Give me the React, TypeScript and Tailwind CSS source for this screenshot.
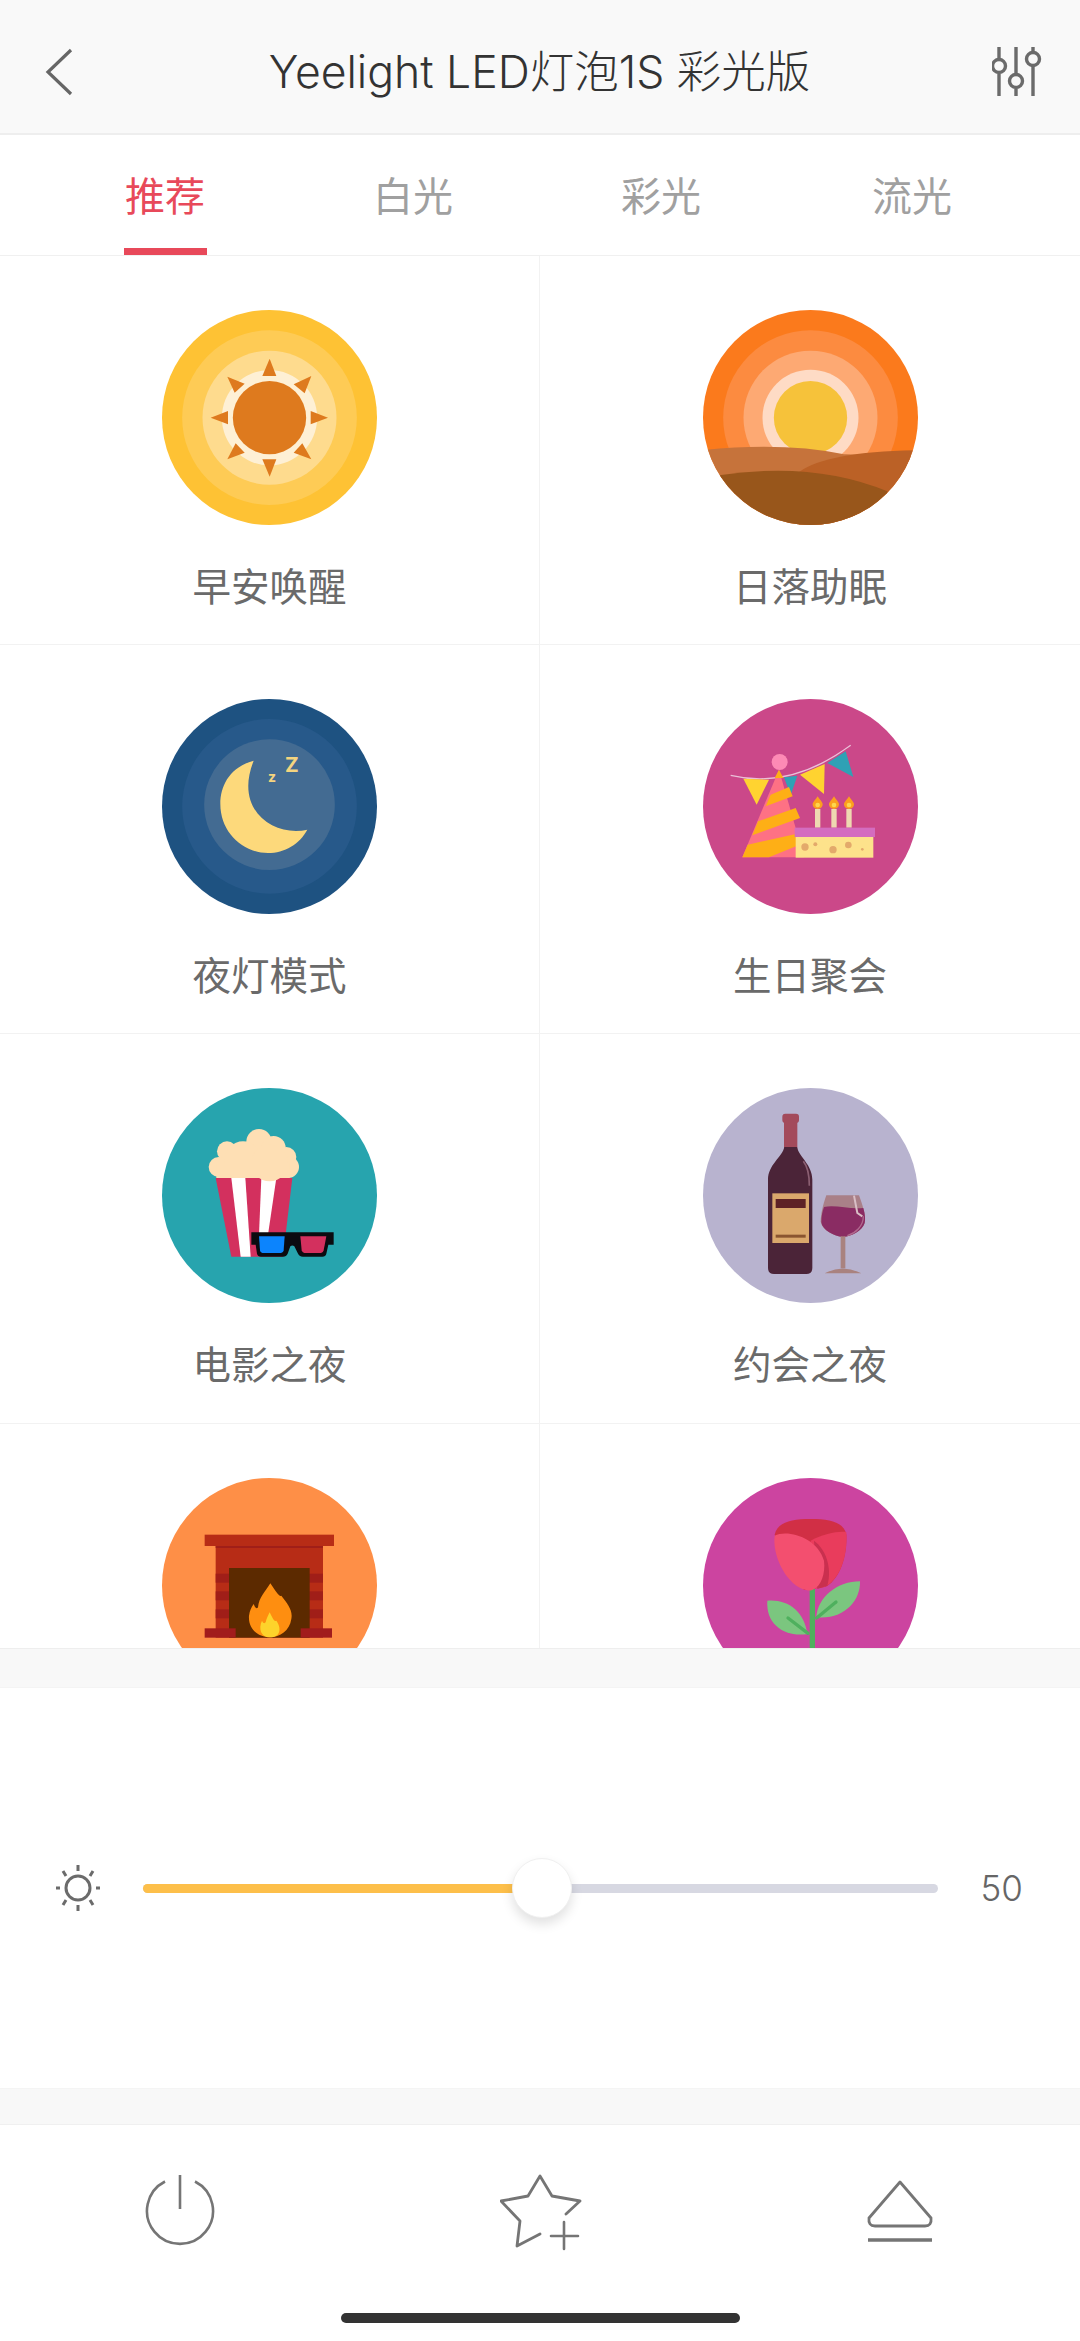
import React from "react";

const FONT = "font-['Inter','Noto_Sans_CJK_SC',sans-serif]";

function Scene({ top, bg, id, children }: { top: number; bg: string; id: string; children?: React.ReactNode }) {
  const cy = top + 322.5;
  return (
    <svg viewBox={`97 ${top} 645 645`} className="w-[215px] h-[215px] block shrink-0">
      <defs>
        <clipPath id={id}>
          <circle cx="419.5" cy={cy} r="322.5" />
        </clipPath>
      </defs>
      <circle cx="419.5" cy={cy} r="322.5" fill={bg} />
      <g clipPath={`url(#${id})`}>{children}</g>
    </svg>
  );
}

const Sun = () => (
  <Scene top={62} bg="#fec234" id="c1">
    <circle cx="419.5" cy="385" r="262" fill="#fecb55" />
    <circle cx="419.5" cy="385" r="201" fill="#fedb8e" />
    <circle cx="419.5" cy="385" r="143" fill="#fef0d5" />
    <circle cx="419.5" cy="385" r="110" fill="#de7a1e" />
    <g fill="#de7a1e">
      <polygon points="420,208 398,260 440,260" />
      <polygon points="420,562 398,510 440,510" />
      <polygon points="243,385 295,365 295,405" />
      <polygon points="595,385 543,365 543,405" />
      <polygon points="293,262 345,283 315,310" />
      <polygon points="545,260 492,285 525,312" />
      <polygon points="293,510 318,462 345,490" />
      <polygon points="545,510 518,462 492,490" />
    </g>
  </Scene>
);

const Sunset = () => (
  <Scene top={62} bg="#fb7a1c" id="c2">
    <circle cx="419.5" cy="385" r="262" fill="#fc8b40" />
    <circle cx="419.5" cy="385" r="201" fill="#fda973" />
    <circle cx="419.5" cy="385" r="144" fill="#fedbc5" />
    <circle cx="419.5" cy="385" r="110" fill="#f6c23a" />
    <path d="M100 482 Q 340 458 520 495 L 720 500 L 720 760 L 100 760 Z" fill="#c6733b" />
    <path d="M385 548 Q 470 488 730 483 L 730 760 L 385 760 Z" fill="#bb6126" />
    <path d="M145 558 Q 430 515 650 606 L 650 760 L 145 760 Z" fill="#98561b" />
  </Scene>
);

const Moon = () => (
  <Scene top={60} bg="#1e5281" id="c3">
    <circle cx="419.5" cy="382" r="262" fill="#27598a" />
    <circle cx="419.5" cy="377" r="196" fill="#436b92" />
    <path
      d="M372 245 C 300 265 272 320 272 375 C 272 460 340 522 415 522 C 465 522 510 495 533 452 C 440 475 310 400 372 245 Z"
      fill="#fdd97b"
    />
    <text x="466" y="278" fontSize="62" fontWeight="700" fontFamily="Inter, sans-serif" fill="#f4d47f">Z</text>
    <text x="415" y="310" fontSize="42" fontWeight="700" fontFamily="Inter, sans-serif" fill="#f4d47f">z</text>
  </Scene>
);

const Party = () => (
  <Scene top={58} bg="#cb4889" id="c4">
    <polygon points="340,293 380,288 360,347" fill="#2fa1b5" />
    <path d="M180 287 Q 360 330 540 197" fill="none" stroke="#eac0d8" strokeWidth="4" />
    <polygon points="218,297 295,300 258,375" fill="#ffd330" />
    <polygon points="388,285 462,253 460,343" fill="#ffd330" />
    <polygon points="470,250 525,215 548,292" fill="#2fa1b5" />
    <polygon points="325,270 215,533 400,533" fill="#fe7184" />
    <g fill="#feaf16">
      <polygon points="325,270 338,295 312,295" />
      <polygon points="300,345 355,322 366,350 285,380" />
      <polygon points="262,425 375,385 388,415 245,467" />
      <polygon points="231,495 390,460 400,490 295,533 215,533" />
    </g>
    <circle cx="327" cy="247" r="24" fill="#fd8ab5" />
    <rect x="433" y="388" width="16" height="56" fill="#eed9b1" />
    <rect x="482" y="388" width="16" height="56" fill="#eed9b1" />
    <rect x="527" y="388" width="16" height="56" fill="#eed9b1" />
    {[441, 490, 535].map((x) => (
      <g key={x}>
        <path d={`M${x} 350 C ${x + 8} 362 ${x + 15} 368 ${x + 15} 374 C ${x + 15} 382 ${x + 8} 388 ${x} 388 C ${x - 8} 388 ${x - 15} 382 ${x - 15} 374 C ${x - 15} 368 ${x - 8} 362 ${x} 350 Z`} fill="#fc9f1e" />
        <circle cx={x} cy="376" r="7" fill="#fdd64f" />
      </g>
    ))}
    <rect x="375" y="472" width="233" height="62" fill="#fde28b" />
    <rect x="372" y="444" width="241" height="28" fill="#d46cbf" />
    <g fill="#e3aa6b">
      <circle cx="403" cy="502" r="11" />
      <circle cx="434" cy="494" r="6" />
      <circle cx="487" cy="510" r="11" />
      <circle cx="533" cy="496" r="10" />
      <circle cx="575" cy="509" r="4" />
    </g>
  </Scene>
);

const Popcorn = () => (
  <Scene top={55} bg="#27a4ae" id="c5">
    <path d="M258 325 L488 325 L460 561 L305 561 Z" fill="#d3305e" />
    <path d="M305 325 L347 325 L363 561 L333 561 Z" fill="#ffffff" />
    <path d="M395 325 L440 325 L415 495 L388 495 Z" fill="#ffffff" />
    <g fill="#fedfb4">
      <circle cx="292" cy="245" r="30" />
      <circle cx="267" cy="292" r="30" />
      <circle cx="388" cy="216" r="38" />
      <circle cx="432" cy="235" r="36" />
      <circle cx="470" cy="262" r="30" />
      <circle cx="475" cy="292" r="33" />
      <circle cx="340" cy="270" r="55" />
      <circle cx="420" cy="280" r="55" />
      <rect x="260" y="280" width="220" height="45" />
    </g>
    <path d="M365 488 L612 488 L612 525 L596 525 L590 552 Q 588 561 578 561 L520 561 Q 508 561 504 550 L 494 530 Q 488 525 482 530 L 474 552 Q 470 561 460 561 L 394 561 Q 384 561 382 552 L 378 525 L 365 525 Z" fill="#0b0b10" />
    <path d="M388 500 L465 500 L462 542 Q 461 550 454 550 L 398 550 Q 392 550 391 542 Z" fill="#0c84fd" />
    <path d="M512 500 L590 500 L582 542 Q 580 550 574 550 L 524 550 Q 518 550 516 542 Z" fill="#d3305e" />
  </Scene>
);

const Wine = () => (
  <Scene top={55} bg="#b8b3cf" id="c6">
    <path d="M340 150 L380 150 L380 240 L340 240 Z" fill="#a34a5b" />
    <rect x="335" y="132" width="50" height="28" rx="9" fill="#a34a5b" />
    <path d="M341 232 L379 232 C 385 262 425 285 425 330 L425 595 Q425 613 407 613 L310 613 Q292 613 292 595 L292 330 C 292 285 335 262 341 232 Z" fill="#4b2438" />
    <path d="M398 275 C 410 290 416 320 416 348" fill="none" stroke="#8b5f72" strokeWidth="5" />
    <rect x="305" y="371" width="110" height="149" fill="#daa86c" />
    <rect x="315" y="388" width="90" height="27" fill="#5e2226" />
    <rect x="315" y="495" width="90" height="9" fill="#8a5530" />
    <path d="M467 377 L565 377 C 575 405 585 435 583 455 C 580 480 545 500 517 502 C 490 500 452 480 450 455 C 450 435 457 405 467 377 Z" fill="#a98088" />
    <path d="M460 412 C 495 405 540 420 578 415 C 584 435 584 450 582 460 C 575 482 545 500 517 502 C 490 500 455 482 452 458 C 452 440 455 425 460 412 Z" fill="#8a2c63" />
    <path d="M550 378 L 560 430 L 575 440" fill="none" stroke="#d9bfc6" strokeWidth="6" />
    <path d="M578 440 C 578 470 555 490 530 498" fill="none" stroke="#b06a8e" strokeWidth="4" />
    <rect x="510" y="500" width="14" height="96" fill="#a9827f" />
    <path d="M462 611 Q 516 582 572 611 Z" fill="#a9827f" />
  </Scene>
);

const Fireplace = () => (
  <Scene top={52} bg="#fe8f47" id="c7">
    <rect x="258" y="255" width="322" height="276" fill="#b72c16" />
    <rect x="225" y="222" width="388" height="34" fill="#b72c16" />
    <rect x="258" y="256" width="322" height="6" fill="#a01e18" />
    <g fill="#a01e18">
      <rect x="258" y="339" width="322" height="27" />
      <rect x="258" y="392" width="322" height="27" />
      <rect x="258" y="446" width="322" height="27" />
    </g>
    <rect x="298" y="322" width="242" height="209" fill="#5c2a00" />
    <rect x="225" y="503" width="93" height="28" fill="#a11c1c" />
    <rect x="513" y="503" width="94" height="28" fill="#a11c1c" />
    <path d="M422 368 C 440 395 450 410 455 405 C 475 430 490 450 485 475 C 480 510 450 530 422 530 C 385 530 355 505 358 465 C 360 450 365 440 372 430 C 378 445 382 445 385 440 C 388 410 405 395 422 368 Z" fill="#fe8e10" />
    <path d="M420 455 C 430 475 435 485 440 480 C 455 500 455 530 420 530 C 395 530 385 505 397 480 C 402 490 405 488 408 485 C 410 475 415 465 420 455 Z" fill="#fdd32b" />
  </Scene>
);

const Rose = () => (
  <Scene top={52} bg="#cc44a0" id="c8">
    <rect x="417" y="385" width="16" height="240" fill="#4fb05e" />
    <path d="M437 470 C 440 410 500 362 568 362 C 570 420 520 478 437 470 Z" fill="#7bc67f" />
    <path d="M410 520 C 340 530 285 490 290 420 C 350 415 400 450 410 520 Z" fill="#7bc67f" />
    <path d="M438 472 L 496 424" fill="none" stroke="#4fb05e" strokeWidth="10" strokeLinecap="round" />
    <path d="M412 518 L 352 472" fill="none" stroke="#4fb05e" strokeWidth="10" strokeLinecap="round" />
    <path d="M312 222 C 320 185 360 175 420 175 C 480 175 520 185 527 222 C 530 300 500 360 465 378 L 400 388 Z" fill="#d12f45" />
    <path d="M420 240 C 460 218 510 210 527 215 C 532 290 505 360 460 380 L 420 385 Z" fill="#e93c5c" />
    <path d="M430 240 C 465 265 485 320 470 375 L 440 385 Z" fill="#c9304f" />
    <path d="M312 225 C 350 205 440 230 460 300 C 465 340 450 375 430 385 C 420 392 410 390 395 385 C 340 360 305 280 312 225 Z" fill="#f34f6f" />
  </Scene>
);

const scenes: { label: string; icon: React.ReactNode }[] = [
  { label: "早安唤醒", icon: <Sun /> },
  { label: "日落助眠", icon: <Sunset /> },
  { label: "夜灯模式", icon: <Moon /> },
  { label: "生日聚会", icon: <Party /> },
  { label: "电影之夜", icon: <Popcorn /> },
  { label: "约会之夜", icon: <Wine /> },
  { label: "", icon: <Fireplace /> },
  { label: "", icon: <Rose /> },
];

const tabs = ["推荐", "白光", "彩光", "流光"];

export default function App() {
  return (
    <div className={`w-[1080px] h-[2341px] bg-white flex flex-col overflow-hidden ${FONT}`}>
      {/* header */}
      <header className="h-[135px] shrink-0 bg-[#f9f9f9] border-b-2 border-[#eeeeee] flex items-center justify-between pl-[45px] pr-[38px] pt-[11px]">
        <svg width="28" height="48" viewBox="0 0 28 48" fill="none" stroke="#666666" strokeWidth="3.2">
          <path d="M26 2 L3 24 L26 46" />
        </svg>
        <h1 className="ml-[14px] text-[44.5px] leading-none font-light text-[#333333]">Yeelight LED灯泡1S 彩光版</h1>
        <svg width="50" height="52" viewBox="0 0 50 52" fill="none" stroke="#6b6b6b" strokeWidth="3.4">
          <path d="M7 1 V13 M7 28 V50 M24 1 V28 M24 43 V50 M41 1 V6 M41 20 V50" />
          <circle cx="7" cy="20" r="6.5" />
          <circle cx="24" cy="35" r="6.5" />
          <circle cx="41" cy="13" r="6.5" />
        </svg>
      </header>

      {/* tabs */}
      <nav className="h-[121px] shrink-0 grid grid-cols-[248px_248px_248px_254px] pl-[41px] border-b border-[#f0f0f0]">
        {tabs.map((t, i) => (
          <div key={t} className="relative flex items-center justify-center">
            <span className={`text-[40px] leading-none mt-[3px] ${i === 0 ? "text-[#e8495a]" : "text-[#a0a0a0]"}`}>{t}</span>
            {i === 0 && <span className="absolute bottom-0 left-[83px] w-[83px] h-[7px] bg-[#e8495a]" />}
          </div>
        ))}
      </nav>

      {/* scene grid */}
      <section className="h-[1393px] shrink-0 overflow-hidden grid grid-cols-2 auto-rows-[389.2px] border-b border-[#eeeeee]">
        {scenes.map((s, i) => (
          <div
            key={i}
            className={`flex flex-col items-center pt-[54px] border-b border-[#f2f2f2] ${i % 2 === 0 ? "border-r" : ""}`}
          >
            {s.icon}
            <span className="mt-[37px] text-[38.5px] leading-[50px] text-[#6a6a6a]">{s.label}</span>
          </div>
        ))}
      </section>

      <div className="h-[38px] shrink-0 bg-[#f8f8f8]" />

      {/* brightness */}
      <section className="h-[402px] shrink-0 flex items-center pl-[56px] pr-[57px] border-t border-b border-[#f4f4f4]">
        <svg width="44" height="46" viewBox="0 0 44 46" fill="none" stroke="#6b6b6b" strokeWidth="3" className="shrink-0">
          <circle cx="22" cy="23" r="12" />
          <path d="M22 0 V6 M22 40 V46 M0 23 H4 M40 23 H44 M7 6 L10 11 M37 6 L34 11 M7 40 L10 35 M37 40 L34 35" />
        </svg>
        <div className="relative ml-[43px] w-[795px] h-[9px] rounded-full bg-[#d7d8e2] shrink-0">
          <div className="h-full w-[380px] rounded-l-full bg-[#fdbf4a]" />
          <div className="absolute left-[369px] top-1/2 -translate-y-1/2 w-[60px] h-[60px] rounded-full bg-white border border-[#f0f0f0] shadow-[0_6px_12px_rgba(0,0,0,0.12)]" />
        </div>
        <span className="ml-auto text-[35px] leading-none font-light text-[#666666]">50</span>
      </section>

      <div className="h-[36px] shrink-0 bg-[#f8f8f8] border-b border-[#f0f0f0]" />

      {/* bottom bar */}
      <footer className="flex-1 flex flex-col">
        <div className="grid grid-cols-3 h-[188px] pt-[49px]">
          <div className="flex justify-center">
            <svg width="70" height="76" viewBox="0 0 70 76" fill="none" stroke="#757575" strokeWidth="2.6">
              <path d="M20 7.5 A 33 33 0 1 0 50 7.5" />
              <path d="M35 1 V35" />
            </svg>
          </div>
          <div className="flex justify-center">
            <svg width="82" height="78" viewBox="0 0 82 78" fill="none" stroke="#757575" strokeWidth="2.8" strokeLinejoin="round" strokeLinecap="round" className="ml-[1px]">
              <path d="M66 40 L80 27 L52 22 L40 2 L28 22 L1 27 L20 47 L17 72 L40 60" />
              <path d="M64 48 V75 M51 62 H78" strokeWidth="2.6" />
            </svg>
          </div>
          <div className="flex justify-center">
            <svg width="66" height="70" viewBox="0 0 66 70" fill="none" stroke="#757575" strokeWidth="2.8" strokeLinejoin="round" className="mt-[6px]">
              <path d="M33 2 L64 38 Q 65 46 58 46 L8 46 Q 1 46 2 38 Z" />
              <path d="M1 60 H65" strokeWidth="3.4" />
            </svg>
          </div>
        </div>
        <div className="self-center w-[399px] h-[10px] rounded-full bg-[#333333]" />
      </footer>
    </div>
  );
}
